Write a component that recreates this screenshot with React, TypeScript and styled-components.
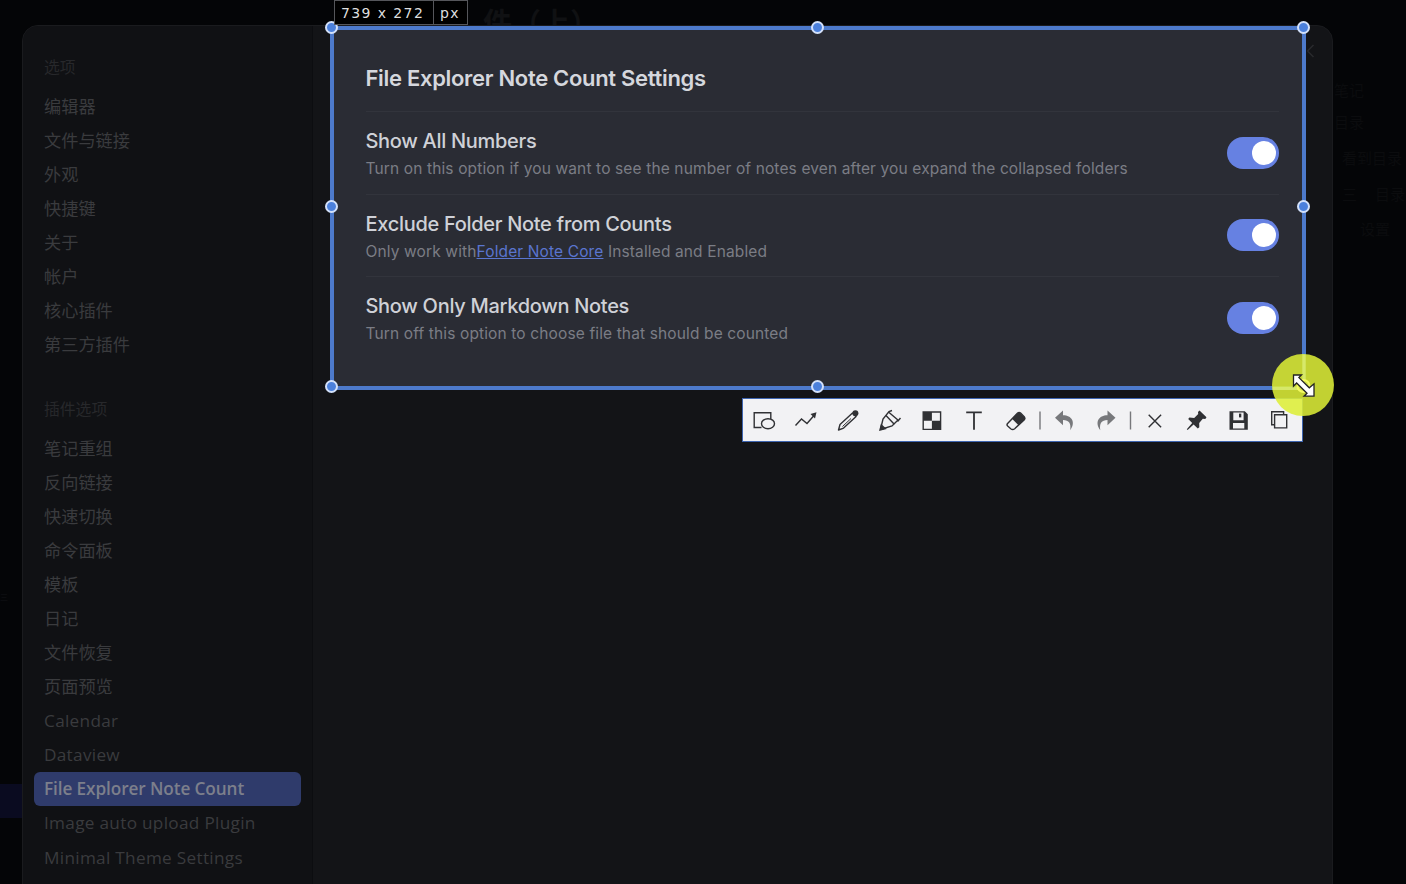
import React from 'react';
import styled, { createGlobalStyle } from 'styled-components';

const cjk = '"Noto Sans CJK SC", sans-serif';

const GlobalStyle = createGlobalStyle`
  * { box-sizing: border-box; }
  body { margin: 0; background: #040507; overflow: hidden; }
`;

const Screen = styled.div`
  position: relative;
  width: 1406px;
  height: 884px;
  overflow: hidden;
  padding: 25px 73px 0 22px;
  background: #040507;
  font-family: Inter, ${cjk};
`;

const Modal = styled.main`
  position: relative;
  display: grid;
  grid-template-columns: 290px 1fr;
  height: 880px;
  background: #131417;
  border: 1px solid #1a1b1e;
  border-radius: 16px;
`;

const Sidebar = styled.nav`
  display: flex;
  flex-direction: column;
  padding: 26px 11px 0;
  background: #101114;
  border-right: 1px solid #0c0d10;
  border-radius: 15px 0 0 15px;
  font-family: "Open Sans", ${cjk};
`;

const Group = styled.section`
  display: flex;
  flex-direction: column;
  margin-bottom: 32px;
`;

const GroupTitle = styled.h2`
  margin: 0 0 3.5px;
  padding-left: 10px;
  height: 34px;
  line-height: 31px;
  font-size: 15.8px;
  font-weight: 400;
  color: #27282b;
`;

const NavItem = styled.a<{ $active?: boolean; $latin?: boolean }>`
  height: 34.08px;
  padding-left: 10px;
  line-height: 34px;
  font-size: 17.2px;
  font-weight: ${p => (p.$active ? 600 : 400)};
  letter-spacing: ${p => (p.$active ? '-0.1px' : p.$latin ? '0.3px' : '0')};
  white-space: nowrap;
  border-radius: 6px;
  color: ${p => (p.$active ? '#7c7f8b' : '#3a3b3e')};
  background: ${p => (p.$active ? '#2f3b6b' : 'transparent')};
`;

const Content = styled.div`
  display: flex;
  flex-direction: column;
  align-items: flex-start;
  padding-left: 17px;
`;

const Selection = styled.section`
  position: relative;
  width: 976px;
  height: 364px;
  padding: 28px 23px 0 31.5px;
  background: #2a2c34;
  border: 4px solid #4d7acb;
`;

const PanelTitle = styled.h1`
  margin: 0;
  height: 53px;
  line-height: 40px;
  font-size: 22px;
  font-weight: 600;
  letter-spacing: -0.31px;
  color: #d5d7dd;
`;

const Setting = styled.div`
  display: flex;
  align-items: center;
  justify-content: space-between;
  height: 82.5px;
  border-top: 1px solid #32343c;
`;

const SettingText = styled.div`
  padding-top: 6px;
`;

const SettingName = styled.div`
  height: 27px;
  line-height: 27px;
  font-size: 20px;
  font-weight: 450;
  letter-spacing: -0.3px;
  color: #cfd1d7;
  white-space: nowrap;
`;

const SettingHint = styled.div`
  height: 28px;
  line-height: 28px;
  font-size: 15.5px;
  letter-spacing: 0.13px;
  color: #7b7d85;
  white-space: nowrap;
`;

const HintLink = styled.a`
  color: #5a75cf;
  text-decoration: underline;
`;

const Toggle = styled.span`
  display: flex;
  justify-content: flex-end;
  align-items: center;
  width: 52px;
  height: 32px;
  padding-right: 3px;
  border-radius: 16px;
  background: #6681e2;
`;

const Knob = styled.span`
  width: 24px;
  height: 24px;
  border-radius: 50%;
  background: #fff;
`;

const Handle = styled.i<{ $x: number; $y: number }>`
  position: absolute;
  left: ${p => p.$x}px;
  top: ${p => p.$y}px;
  width: 13px;
  height: 13px;
  border: 2px solid #d3e1fa;
  border-radius: 50%;
  background: #4b80dc;
`;

const SizeLabel = styled.div`
  position: absolute;
  z-index: 2;
  left: 334px;
  top: 0;
  display: flex;
  width: 134px;
  height: 25px;
  border: 1px solid #55565a;
  background: #000;
  color: #dedede;
  font: 14px/24px "DejaVu Sans", sans-serif;
`;

const LabelPart = styled.span<{ $w: number }>`
  width: ${p => p.$w}px;
  padding-left: 6px;
  white-space: nowrap;
  letter-spacing: 1.4px;
  & + & { border-left: 1px solid #55565a; }
`;

const Toolbar = styled.div`
  width: 561px;
  height: 44px;
  margin: 8px 0 0 412px;
  background: #f2f2f4;
  border: 1.5px solid #3e65b0;
`;

const Ghost = styled.span<{ $x: number; $y: number; $size: number; $color?: string }>`
  position: absolute;
  left: ${p => p.$x}px;
  top: ${p => p.$y}px;
  font: ${p => (p.$size > 20 ? 700 : 400)} ${p => p.$size}px/1 ${cjk};
  color: ${p => p.$color || '#0b0c0e'};
  white-space: nowrap;
`;

const GhostRow = styled.i`
  position: absolute;
  left: 0;
  top: 784px;
  width: 22px;
  height: 34px;
  background: #0a0b20;
`;

const CloseIcon = styled.svg`
  position: absolute;
  left: 1276px;
  top: 16px;
`;

const Halo = styled.div`
  position: absolute;
  left: 1271.5px;
  top: 354px;
  width: 62px;
  height: 62px;
  border-radius: 50%;
  background: rgba(220, 238, 54, 0.87);
`;

const HaloArt = styled.svg`
  display: block;
`;

const general = ['编辑器', '文件与链接', '外观', '快捷键', '关于', '帐户', '核心插件', '第三方插件'];
const plugins = ['笔记重组', '反向链接', '快速切换', '命令面板', '模板', '日记', '文件恢复', '页面预览', 'Calendar', 'Dataview', 'File Explorer Note Count', 'Image auto upload Plugin', 'Minimal Theme Settings'];

const settings: { name: string; hint: React.ReactNode }[] = [
  { name: 'Show All Numbers', hint: 'Turn on this option if you want to see the number of notes even after you expand the collapsed folders' },
  { name: 'Exclude Folder Note from Counts', hint: <>Only work with<HintLink>Folder Note Core</HintLink> Installed and Enabled</> },
  { name: 'Show Only Markdown Notes', hint: 'Turn off this option to choose file that should be counted' },
];

const handles = [[-9, -9], [477, -9], [962.5, -9], [-9, 170], [962.5, 170], [-9, 350], [477, 350]];

/* Icon coordinates share one strip whose origin is the toolbar's inner corner. */
function ToolIcons() {
  return (
    <svg width="558" height="41" viewBox="743 399 558 41" fill="none" stroke="#303134" strokeWidth="1.4">
      <path d="M761.5 427.5h-7.3v-14.8h16.6v6.2" />
      <ellipse cx="768" cy="423.7" rx="6.5" ry="5" />
      <path d="M795.5 425.5l6-6.5 5.5 4.5 7-8" />
      <path d="M810.5 414l6-1.8-1.5 6.2z" fill="#303134" stroke="none" />
      <path d="M838.5 430l1.5-5.5 12.5-11.5 3.6 3.6-12.5 11.5z" strokeLinejoin="round" />
      <path d="M842.5 426.5l8.5-8" strokeWidth="1" />
      <circle cx="855.4" cy="413.2" r="3" fill="#303134" stroke="none" />
      <path d="M880.5 429.5l2.5-10.5 6-7.5 3-1M880.5 429.5l11.5-3.5 6-6M888.5 412l10 8.5M886 415.5l8.5 9M897.5 421.5l3-3.5" />
      <path d="M880 430l1.3-5 4 3.7z" fill="#303134" />
      <path d="M923.2 412h17.4v17.4h-17.4z" />
      <path d="M923.2 412h8.7v8.7h-8.7zM931.9 420.7h8.7v8.7h-8.7z" fill="#303134" stroke="none" />
      <path d="M966.2 412.4h15.6M974 412v17.8" strokeWidth="1.8" />
      <path d="M1007.6 423.5l10-10.4q1.5-1.3 3 0l3.6 3.6q1.2 1.5 0 3l-9.5 9q-2 1.5-4 0l-3-2.6q-1.3-1.3-.1-2.6z" />
      <path d="M1012 418.8l6-6q1-.8 2 0l4.9 4.9q.8 1 0 2l-6.2 5.8z" fill="#303134" stroke="none" />
      <path d="M1040 411.5v18M1130.5 411.5v18" stroke="#77787b" />
      <path d="M1063 410.5l-8 7.3 8 7.4v-5.3c6 0 8.3 3.5 7.2 10.3 6-8 1.5-15-7.2-15z" fill="#77787b" stroke="none" />
      <path d="M1107.5 410.5l8 7.3-8 7.4v-5.3c-6 0-8.3 3.5-7.2 10.3-6-8-1.5-15 7.2-15z" fill="#77787b" stroke="none" />
      <path d="M1148.7 414.8l12.4 12.4M1161.1 414.8l-12.4 12.4" />
      <path d="M1199.5 410.6l7 6.7-1.2 1.6-2.5-.2-3.6 4.2.1 4.3-1.5 1.2-4.2-4-6 5.6-.8-.8 5.4-6.2-4-4 1.2-1.4 4.8.3 4-4-.2-2z" fill="#303134" stroke="none" />
      <path d="M1229.5 411.2h15.3l3 3v15.6h-18.3zM1233.3 412.5v7.7h10.3v-7.7zM1233 423v5.6h11.3V423z" fill="#303134" fillRule="evenodd" stroke="none" />
      <path d="M1239 413.6h2.3v3.8h-2.3z" fill="#303134" stroke="none" />
      <path d="M1274.6 414.8h12.1v13.1h-12.1zM1274.6 424.8h-2.9v-13.1h11.9v3.1" />
    </svg>
  );
}

export default function App() {
  return (
    <Screen>
      <GlobalStyle />
      <Ghost $x={483} $y={7} $size={29} $color="#101113">件（上）</Ghost>
      <Ghost $x={1334} $y={82} $size={15}>笔记</Ghost>
      <Ghost $x={1334} $y={114} $size={15}>目录</Ghost>
      <Ghost $x={1342} $y={150} $size={15}>看到目录</Ghost>
      <Ghost $x={1342} $y={186} $size={15}>三</Ghost>
      <Ghost $x={1375} $y={186} $size={15}>目录</Ghost>
      <Ghost $x={1360} $y={221} $size={15}>设置</Ghost>
      <Ghost $x={0} $y={593} $size={8} $color="#131417">三</Ghost>
      <GhostRow />
      <Modal>
        <Sidebar>
          <Group>
            <GroupTitle>选项</GroupTitle>
            {general.map(t => <NavItem key={t}>{t}</NavItem>)}
          </Group>
          <Group>
            <GroupTitle>插件选项</GroupTitle>
            {plugins.map(t => (
              <NavItem key={t} $latin={/^[A-Z]/.test(t)} $active={t === 'File Explorer Note Count'}>{t}</NavItem>
            ))}
          </Group>
        </Sidebar>
        <Content>
          <Selection>
            <PanelTitle>File Explorer Note Count Settings</PanelTitle>
            {settings.map(s => (
              <Setting key={s.name}>
                <SettingText>
                  <SettingName>{s.name}</SettingName>
                  <SettingHint>{s.hint}</SettingHint>
                </SettingText>
                <Toggle><Knob /></Toggle>
              </Setting>
            ))}
            {handles.map(([x, y]) => <Handle key={`${x},${y}`} $x={x} $y={y} />)}
          </Selection>
          <Toolbar><ToolIcons /></Toolbar>
        </Content>
        <CloseIcon width="18" height="18" viewBox="0 0 18 18" stroke="#292a2d" strokeWidth="1.5">
          <path d="M8.5 9l6-6M8.5 9l6 6" fill="none" />
        </CloseIcon>
      </Modal>
      <SizeLabel><LabelPart $w={98}>739 x 272</LabelPart><LabelPart $w={34}>px</LabelPart></SizeLabel>
      <Halo>
        <HaloArt width="62" height="62" viewBox="1271.5 354 62 62">
          <path d="M1303.5 354.5v32M1272 388.5h32" stroke="#dcec78" strokeWidth="3" opacity=".7" />
          <circle cx="1303" cy="386" r="6" fill="#cfe04a" stroke="#f4fa60" strokeWidth="2" />
          <path d="M1293 375h8l-2.6 2.6 10.4 10.2 4.7-4v12.4h-10l3-3-10.4-10.2-3.1 3.2z" fill="#fff" stroke="#222" strokeWidth="1.3" />
        </HaloArt>
      </Halo>
    </Screen>
  );
}
